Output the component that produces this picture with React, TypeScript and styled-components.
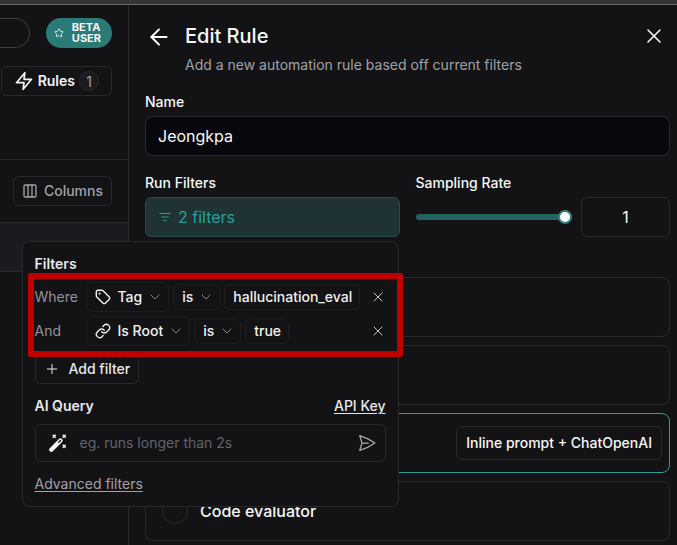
import React from 'react';
import styled, { createGlobalStyle, css } from 'styled-components';
import { ArrowLeft, ChevronDown, Columns3, Plus, Star, X } from 'lucide-react';

const GlobalStyle = createGlobalStyle`
  *, *::before, *::after { box-sizing: border-box; }
  html, body { margin: 0; background: #131315; overflow: hidden; }
  body, button, input { font-family: Inter, "Liberation Sans", sans-serif; }
  button, input { margin: 0; color: inherit; }
  button { cursor: pointer; }
  svg { flex: none; display: block; }
`;

const Page = styled.div`
  display: flex;
  flex-direction: column;
  height: 100vh;
  overflow: hidden;
  background: #131315;
  color: #f7f7f8;
  font-size: 14px;
  line-height: 20px;
`;

const WindowEdge = styled.div`
  flex: none;
  height: 5px;
  background: #353535;
  border-bottom: 1px solid #6a6a6a;
`;

const Body = styled.div`
  display: grid;
  grid-template-columns: 128px minmax(0, 1fr);
  flex: 1;
  min-height: 0;
`;

const Sidebar = styled.aside`
  display: flex;
  flex-direction: column;
  min-width: 0;
`;

const SideSection = styled.div`
  display: flex;
  flex-direction: column;
  align-items: flex-end;
  gap: 18px;
  padding: 13px 16px 63px 0;
  border-bottom: 1px solid #29292d;
`;

const SideToolbar = styled.div`
  display: flex;
  justify-content: flex-end;
  padding: 16px 16px;
  border-bottom: 1px solid #29292d;
`;

const SideRow = styled.div`
  height: 49px;
  background: #1b1b1f;
  border-bottom: 1px solid #29292d;
`;

const TopLine = styled.div`
  display: flex;
  align-self: stretch;
  gap: 16px;
`;

const SearchPill = styled.input`
  flex: 1;
  min-width: 0;
  height: 30px;
  padding: 0;
  background: transparent;
  border: 1px solid #3f3f46;
  border-left: 0;
  border-radius: 0 15px 15px 0;
`;

const BetaBadge = styled.div`
  display: flex;
  align-items: center;
  justify-content: space-between;
  width: 66px;
  height: 30px;
  padding: 0 11px 0 8px;
  border-radius: 15px;
  background: #2a7a77;
  font-size: 11px;
  font-weight: 700;
  line-height: 11px;
`;

const OutlineButton = styled.button<{ $muted?: boolean }>`
  display: inline-flex;
  align-items: center;
  gap: 6px;
  height: 30px;
  padding: 0 8px;
  background: transparent;
  border: 1px solid #29292d;
  border-radius: 6px;
  color: ${(p) => (p.$muted ? '#a1a1aa' : '#f7f7f8')};
  font-size: 14px;
  font-weight: 500;
  line-height: 20px;
  white-space: nowrap;
`;

const RulesButton = styled(OutlineButton)`
  gap: 4px;
  padding: 0 12px;
  font-weight: 600;
`;

const Count = styled.span`
  display: grid;
  place-items: center;
  width: 20px;
  height: 20px;
  border: 1px solid #29292d;
  border-radius: 50%;
  background: #1b1b1f;
  color: #a1a1aa;
  font-weight: 400;
`;

const Panel = styled.main`
  min-width: 0;
  padding: 15px 7px 0 16px;
  border-left: 1px solid #29292d;
`;

const PanelHeader = styled.header`
  display: grid;
  grid-template-columns: 27px minmax(0, 1fr) 32px;
  column-gap: 13px;
  align-items: center;
`;

const Title = styled.h1`
  margin: 0;
  font-size: 20px;
  font-weight: 500;
  line-height: 32px;
`;

const Subtitle = styled.p`
  grid-column: 2;
  margin: 3px 0 0;
  color: #a1a1aa;
`;

const IconButton = styled.button<{ $muted?: boolean }>`
  display: grid;
  place-items: center;
  height: 24px;
  padding: 0;
  background: none;
  border: 0;
  color: ${(p) => (p.$muted ? '#c4c4ca' : '#ffffff')};
`;

const Label = styled.label`
  display: block;
  margin-bottom: 4px;
  font-weight: 500;
`;

const Field = styled.div`
  min-width: 0;
  margin-top: 17px;
`;

const fieldBox = css`
  width: 100%;
  height: 40px;
  border: 1px solid #29292d;
  border-radius: 8px;
  font-size: 16px;
  line-height: 24px;
`;

const NameInput = styled.input`
  ${fieldBox}
  display: block;
  padding: 0 12px;
  background: #07070c;
`;

const RateInput = styled.input`
  ${fieldBox}
  width: 89px;
  padding: 0;
  background: transparent;
  text-align: center;
  border-radius: 6px;
`;

const Columns = styled.div`
  display: grid;
  grid-template-columns: minmax(0, 1fr) minmax(0, 1fr);
  gap: 16px;
`;

const Anchor = styled.div`
  position: relative;
`;

const FilterButton = styled.button`
  ${fieldBox}
  display: flex;
  align-items: center;
  gap: 6px;
  padding: 0 12px;
  background: #203334;
  border-color: #234c4b;
  border-radius: 6px;
  color: #27a09b;
`;

const RateRow = styled.div`
  display: flex;
  align-items: center;
  gap: 9px;
`;

const Slider = styled.input`
  flex: 1;
  min-width: 0;
  height: 14px;
  appearance: none;
  background: transparent;
  &::-webkit-slider-runnable-track {
    height: 6px;
    border-radius: 3px;
    background: #24625f;
  }
  &::-webkit-slider-thumb {
    appearance: none;
    width: 14px;
    height: 14px;
    margin-top: -4px;
    border: 2px solid #357f7c;
    border-radius: 50%;
    background: #ffffff;
  }
`;

const Cards = styled.div`
  display: flex;
  flex-direction: column;
  gap: 8px;
  margin-top: 40px;
`;

const Card = styled.div<{ $active?: boolean }>`
  display: flex;
  align-items: center;
  gap: 12px;
  height: 60px;
  padding: 0 7px 0 16px;
  border: 1px solid ${(p) => (p.$active ? '#2f9c97' : '#29292d')};
  border-radius: 8px;
`;

const CardLabel = styled.label`
  font-size: 16px;
  font-weight: 500;
  line-height: 24px;
`;

const Radio = styled.input`
  appearance: none;
  flex: none;
  width: 26px;
  height: 26px;
  margin: 0;
  border: 1px solid #29292d;
  border-radius: 50%;
`;

const PromptButton = styled(OutlineButton)`
  height: 34px;
  margin-left: auto;
  padding: 0 9px;
`;

const Popover = styled.section`
  position: absolute;
  z-index: 1;
  top: calc(100% + 4px);
  right: 1px;
  width: 377px;
  padding: 12px;
  background: #131315;
  border: 1px solid #29292d;
  border-radius: 8px;
  color: #e8e8ea;
`;

const Heading = styled.h2`
  margin: 0;
  font-size: 14px;
  font-weight: 600;
  line-height: 20px;
`;

const Conditions = styled.div`
  position: relative;
  display: flex;
  flex-direction: column;
  gap: 4px;
  margin: 8px 0;
`;

const Highlight = styled.div`
  position: absolute;
  inset: -9px -17px -11px -7px;
  border: 6px solid #c00000;
  border-radius: 2px;
  pointer-events: none;
`;

const Condition = styled.div`
  display: flex;
  align-items: center;
  gap: 4px;
`;

const Joiner = styled.span`
  width: 47px;
  color: #92929c;
`;

const Chip = styled.button<{ $small?: boolean; $menu?: boolean }>`
  display: inline-flex;
  align-items: center;
  gap: 5px;
  height: ${(p) => (p.$small ? 26 : 30)}px;
  padding: 0 ${(p) => (p.$menu ? 5 : 7)}px 0 8px;
  background: transparent;
  border: 1px solid #1d1d20;
  border-radius: 6px;
  color: #f1f1f3;
  font-size: 14px;
  font-weight: 500;
  line-height: 20px;
`;

const ChipLabel = styled.span`
  display: flex;
  align-items: center;
  gap: 7px;
`;

const Chevron = styled(ChevronDown).attrs({ size: 16, strokeWidth: 1.5 })`
  color: #85858e;
`;

const RemoveButton = styled(IconButton)`
  width: 16px;
  margin-left: auto;
`;

const AddButton = styled(OutlineButton)`
  gap: 9px;
  color: #e8e8ea;
`;

const QueryHead = styled.div`
  display: flex;
  justify-content: space-between;
  margin: 12px 0 8px;
`;

const TextLink = styled.a<{ $muted?: boolean }>`
  color: ${(p) => (p.$muted ? '#a1a1aa' : '#e8e8ea')};
  font-weight: ${(p) => (p.$muted ? 400 : 500)};
  text-decoration: underline;
  text-underline-offset: 2px;
`;

const QueryBox = styled.div`
  display: flex;
  align-items: center;
  gap: 12px;
  height: 38px;
  margin-bottom: 12px;
  padding: 0 8px 0 12px;
  border: 1px solid #29292d;
  border-radius: 6px;
`;

const QueryInput = styled.input`
  flex: 1;
  min-width: 0;
  padding: 0;
  background: transparent;
  border: 0;
  font-size: 14px;
  line-height: 20px;
  &::placeholder { color: #61636f; opacity: 1; }
`;

const BoltIcon = () => (
  <svg width="20" height="20" viewBox="0 0 24 24" fill="none" stroke="currentColor" strokeWidth="2" strokeLinejoin="round" aria-hidden="true">
    <path d="M13 2 3 14h9l-1 8 10-12h-9l1-8z" />
  </svg>
);

const FilterLinesIcon = () => (
  <svg width="14" height="14" viewBox="0 0 14 14" fill="none" stroke="currentColor" strokeWidth="1" aria-hidden="true">
    <path d="M1.5 3.5h11M3.5 7h7M5.5 10.5h3" />
  </svg>
);

const TagIcon = () => (
  <svg width="16" height="16" viewBox="0 0 16 16" fill="none" stroke="currentColor" strokeWidth="1.4" strokeLinecap="round" strokeLinejoin="round" aria-hidden="true">
    <path d="M1.3 2.6v4.1c0 .5.2.9.5 1.2l6.3 6.3c.6.6 1.6.6 2.2 0l4-4c.6-.6.6-1.6 0-2.2L8 1.8c-.3-.3-.7-.5-1.2-.5H2.6c-.7 0-1.3.6-1.3 1.3z" />
    <circle cx="4.6" cy="4.6" r=".4" />
  </svg>
);

const LinkIcon = () => (
  <svg width="16" height="16" viewBox="0 0 24 24" fill="none" stroke="currentColor" strokeWidth="2" strokeLinecap="round" strokeLinejoin="round" aria-hidden="true">
    <path d="M10 13a5 5 0 0 0 7.540.540l3-3a5 5 0 0 0-7.070-7.070l-1.720 1.710" />
    <path d="M14 11a5 5 0 0 0-7.540-.540l-3 3a5 5 0 0 0 7.070 7.070l1.710-1.710" />
  </svg>
);

const WandIcon = () => (
  <svg width="20" height="20" viewBox="0 0 20 20" fill="none" stroke="#f7f7f8" aria-hidden="true">
    <path d="M3.3 16.7 12.5 7.5" strokeWidth="4.4" strokeLinecap="round" />
    <path d="m10.7 9.3 1.8-1.8" stroke="#131315" strokeWidth="1.3" strokeLinecap="round" />
    <path d="m4.7 1.7 3 3m0-3-3 3m10-3 3 3m0-3-3 3m0 7 3 3m0-3-3 3" strokeWidth="1.3" />
  </svg>
);

const SendIcon = () => (
  <svg width="20" height="20" viewBox="0 0 24 24" fill="none" stroke="#a9a9b0" strokeWidth="1.5" strokeLinecap="round" strokeLinejoin="round" aria-hidden="true">
    <path d="M6 12 3.27 3.13A59.77 59.77 0 0 1 21.48 12 59.77 59.77 0 0 1 3.27 20.88L6 12zm0 0h7.5" />
  </svg>
);

type ConditionData = { joiner: string; icon: React.ReactNode; field: string; value: string };

const conditions: ConditionData[] = [
  { joiner: 'Where', icon: <TagIcon />, field: 'Tag', value: 'hallucination_eval' },
  { joiner: 'And', icon: <LinkIcon />, field: 'Is Root', value: 'true' },
];

function FilterPopover() {
  return (
    <Popover aria-label="Filters">
      <Heading>Filters</Heading>
      <Conditions>
        {conditions.map((c) => (
          <Condition key={c.field}>
            <Joiner>{c.joiner}</Joiner>
            <Chip $menu><ChipLabel>{c.icon}{c.field}</ChipLabel><Chevron /></Chip>
            <Chip $small $menu>is<Chevron /></Chip>
            <Chip $small>{c.value}</Chip>
            <RemoveButton $muted aria-label={`Remove ${c.field}`}><X size={16} strokeWidth={1.5} /></RemoveButton>
          </Condition>
        ))}
        <Highlight />
      </Conditions>
      <AddButton><Plus size={16} strokeWidth={1.5} />Add filter</AddButton>
      <QueryHead>
        <Heading as="label" htmlFor="query">AI Query</Heading>
        <TextLink href="#api-key">API Key</TextLink>
      </QueryHead>
      <QueryBox>
        <WandIcon />
        <QueryInput id="query" placeholder="eg. runs longer than 2s" />
        <IconButton aria-label="Send"><SendIcon /></IconButton>
      </QueryBox>
      <TextLink $muted href="#advanced">Advanced filters</TextLink>
    </Popover>
  );
}

export default function App() {
  return (
    <Page>
      <GlobalStyle />
      <WindowEdge />
      <Body>
        <Sidebar>
          <SideSection>
            <TopLine>
              <SearchPill aria-label="Search" />
              <BetaBadge><Star size={10} /><span>BETA<br />USER</span></BetaBadge>
            </TopLine>
            <RulesButton><BoltIcon />Rules<Count>1</Count></RulesButton>
          </SideSection>
          <SideToolbar>
            <OutlineButton $muted><Columns3 size={16} />Columns</OutlineButton>
          </SideToolbar>
          <SideRow />
        </Sidebar>
        <Panel>
          <PanelHeader>
            <IconButton aria-label="Back"><ArrowLeft size={26} strokeWidth={1.8} /></IconButton>
            <Title>Edit Rule</Title>
            <IconButton aria-label="Close"><X size={24} strokeWidth={1.5} /></IconButton>
            <Subtitle>Add a new automation rule based off current filters</Subtitle>
          </PanelHeader>
          <Field>
            <Label htmlFor="name">Name</Label>
            <NameInput id="name" defaultValue="Jeongkpa" />
          </Field>
          <Columns>
            <Field>
              <Label htmlFor="filters">Run Filters</Label>
              <Anchor>
                <FilterButton id="filters"><FilterLinesIcon />2 filters</FilterButton>
                <FilterPopover />
              </Anchor>
            </Field>
            <Field>
              <Label htmlFor="rate">Sampling Rate</Label>
              <RateRow>
                <Slider id="rate" type="range" min="0" max="1" step="0.01" defaultValue="1" />
                <RateInput aria-label="Sampling rate value" defaultValue="1" />
              </RateRow>
            </Field>
          </Columns>
          <Cards>
            <Card><Radio type="radio" name="action" aria-label="First action" /></Card>
            <Card><Radio type="radio" name="action" aria-label="Second action" /></Card>
            <Card $active>
              <Radio type="radio" name="action" aria-label="Online evaluator" />
              <PromptButton>Inline prompt + ChatOpenAI</PromptButton>
            </Card>
            <Card>
              <Radio type="radio" name="action" id="code" />
              <CardLabel htmlFor="code">Code evaluator</CardLabel>
            </Card>
          </Cards>
        </Panel>
      </Body>
    </Page>
  );
}
